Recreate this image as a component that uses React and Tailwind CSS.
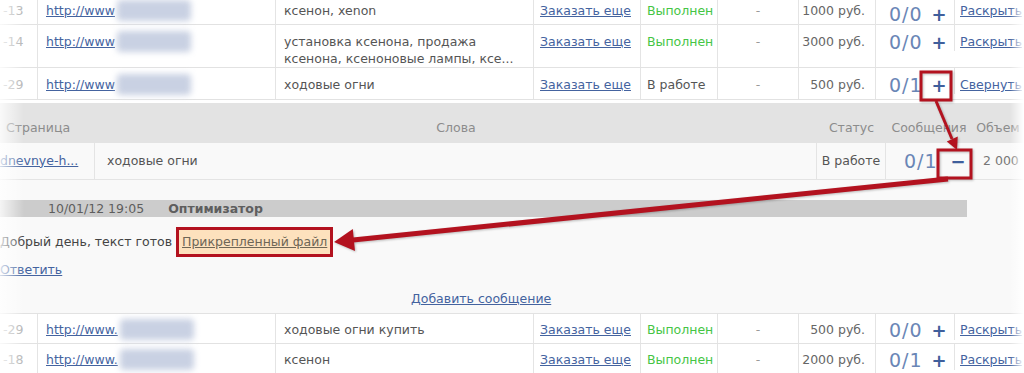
import React from "react";

const topCols = "grid grid-cols-[38px_238px_258px_107px_77px_81px_77px_79px_69px]";
const subCols = "grid grid-cols-[95px_722px_69px_86px_52px]";

const topRows = [
  { h: "h-[25px]", pt: "pt-[2px]", date: "-13", kw: ["ксенон, xenon"], status: "Выполнен", done: true, price: "1000 руб.", msg: "0/0", link: "Раскрыть" },
  { h: "h-[43px]", pt: "pt-[8px]", date: "-14", kw: ["установка ксенона, продажа", "ксенона, ксеноновые лампы, ксе..."], status: "Выполнен", done: true, price: "3000 руб.", msg: "0/0", link: "Раскрыть" },
  { h: "h-[32px]", pt: "pt-[8px]", date: "-29", kw: ["ходовые огни"], status: "В работе", done: false, price: "500 руб.", msg: "0/1", link: "Свернуть" },
];

const bottomRows = [
  { h: "h-[30px]", pt: "pt-[7px]", date: "-29", kw: ["ходовые огни купить"], status: "Выполнен", done: true, price: "500 руб.", msg: "0/0", link: "Раскрыть", dot: true },
  { h: "h-[30px]", pt: "pt-[7px]", date: "-18", kw: ["ксенон"], status: "Выполнен", done: true, price: "2000 руб.", msg: "0/1", link: "Раскрыть", dot: true },
];

function Row({ r }) {
  const cell = `border-r border-[#e4e4e4] leading-[17px] ${r.pt}`;
  return (
    <div className={`${topCols} ${r.h} border-b border-[#e2e2e2] bg-white`}>
      <div className={`${cell} pl-[3px] text-[#b4b4b4]`}>{r.date}</div>
      <div className={`${cell} pl-[8px] flex items-start`}>
        <span className="text-[#44639f] underline">{r.dot ? "http://www." : "http://www"}</span>
        <span className="ml-[2px] mt-[-2px] inline-block w-[74px] h-[21px] rounded bg-[#c9d1e3] blur-[3px]" />
      </div>
      <div className={`${cell} pl-[8px] text-[#555]`}>
        {r.kw.map((k) => (
          <div key={k} className="whitespace-nowrap">{k}</div>
        ))}
      </div>
      <div className={`${cell} pl-[6px]`}>
        <span className="text-[#44639f] underline whitespace-nowrap">Заказать еще</span>
      </div>
      <div className={`${cell} pl-[6px] whitespace-nowrap ${r.done ? "text-[#45c545]" : "text-[#555]"}`}>{r.status}</div>
      <div className={`${cell} text-center text-[#9a9a9a]`}>-</div>
      <div className={`${cell} pr-[10px] text-right text-[#666] whitespace-nowrap`}>{r.price}</div>
      <div className={`${cell} pl-[13px] flex items-center h-[26px]`}>
        <span className="text-[19px] text-[#6a86b6] tracking-[1px]">{r.msg}</span>
        <span className="ml-[9px] text-[18px] font-semibold text-[#3f5f9c]">+</span>
      </div>
      <div className={`leading-[17px] ${r.pt} pl-[5px] whitespace-nowrap overflow-hidden`}>
        <span className="text-[#44639f] underline">{r.link}</span>
      </div>
    </div>
  );
}

export default function App() {
  return (
    <div className="relative w-[1024px] h-[373px] overflow-hidden bg-white font-['DejaVu_Sans',sans-serif] text-[12.5px]">
      {/* верхняя таблица */}
      {topRows.map((r) => (
        <Row key={r.date} r={r} />
      ))}

      {/* раскрытая заявка */}
      <div className="mt-[3px] bg-[#f9f9f9]">
        <div className={`${subCols} h-[40px] bg-[#e3e3e3] text-[#8c8c8c] leading-[17px] pt-[16px]`}>
          <div className="pl-[6px]">Страница</div>
          <div className="text-center">Слова</div>
          <div className="text-center">Статус</div>
          <div className="text-center whitespace-nowrap">Сообщения</div>
          <div className="text-center">Объем</div>
        </div>
        <div className={`${subCols} h-[37px] border-b border-[#e4e4e4] items-stretch`}>
          <div className="border-r border-[#e4e4e4] flex items-center">
            <span className="text-[#44639f] underline whitespace-nowrap">dnevnye-h...</span>
          </div>
          <div className="border-r border-[#e4e4e4] flex items-center pl-[12px] text-[#555]">ходовые огни</div>
          <div className="border-r border-[#e4e4e4] flex items-center justify-center text-[#555] whitespace-nowrap">В работе</div>
          <div className="flex items-center pl-[18px]">
            <span className="text-[19px] text-[#6a86b6] tracking-[1px]">0/1</span>
            <span className="ml-[13px] text-[18px] font-semibold text-[#3f5f9c]">−</span>
          </div>
          <div className="flex items-center pl-[11px] text-[#777] whitespace-nowrap">2 000</div>
        </div>

        <div className="h-[20px]" />
        <div className="w-[967px] h-[17px] bg-[#cccccc] flex items-center text-[#5e5e5e] leading-[17px]">
          <span className="ml-[48px]">10/01/12 19:05</span>
          <span className="ml-[24px] font-bold">Оптимизатор</span>
        </div>

        <div className="mt-[10px] h-[30px] flex items-center text-[#444]">
          <span className="whitespace-nowrap">Добрый день, текст готов</span>
          <span className="ml-[4px] h-[30px] flex items-center border-[3px] border-[#b3121f] bg-[#fde1bd] px-[3px]">
            <span className="text-[#6e6656] underline whitespace-nowrap">Прикрепленный файл</span>
          </span>
        </div>
        <div className="mt-[4px] h-[18px] leading-[18px]">
          <span className="text-[#44639f] underline">Ответить</span>
        </div>
        <div className="mt-[11px] h-[18px] leading-[18px] pl-[411px]">
          <span className="text-[#44639f] underline whitespace-nowrap">Добавить сообщение</span>
        </div>
        <div className="h-[5px]" />
      </div>

      {/* нижняя таблица */}
      <div className="border-t border-[#e2e2e2]">
        {bottomRows.map((r) => (
          <Row key={r.date} r={r} />
        ))}
      </div>

      {/* выцветшие края */}
      <div className="pointer-events-none absolute left-0 top-0 h-full w-[24px] bg-linear-to-r from-white/80 to-white/0" />
      <div className="pointer-events-none absolute right-0 top-0 h-full w-[14px] bg-linear-to-l from-white to-white/0" />

      {/* аннотации */}
      <svg className="pointer-events-none absolute left-0 top-0 drop-shadow-[1px_1px_1px_rgba(0,0,0,0.25)]" width="1024" height="373" viewBox="0 0 1024 373">
        <rect x="921" y="72" width="30" height="28" fill="none" stroke="#b3121f" strokeWidth="3" />
        <line x1="936" y1="101" x2="952" y2="139" stroke="#b3121f" strokeWidth="3" />
        <polygon points="957,150 946.8,141.4 957.8,136.6" fill="#b3121f" />
        <rect x="938" y="150" width="33" height="28" fill="none" stroke="#b3121f" strokeWidth="3" />
        <line x1="948" y1="179" x2="353" y2="240" stroke="#b3121f" strokeWidth="5" />
        <polygon points="334,242 352.8,229 355,250.9" fill="#b3121f" />
      </svg>
    </div>
  );
}
